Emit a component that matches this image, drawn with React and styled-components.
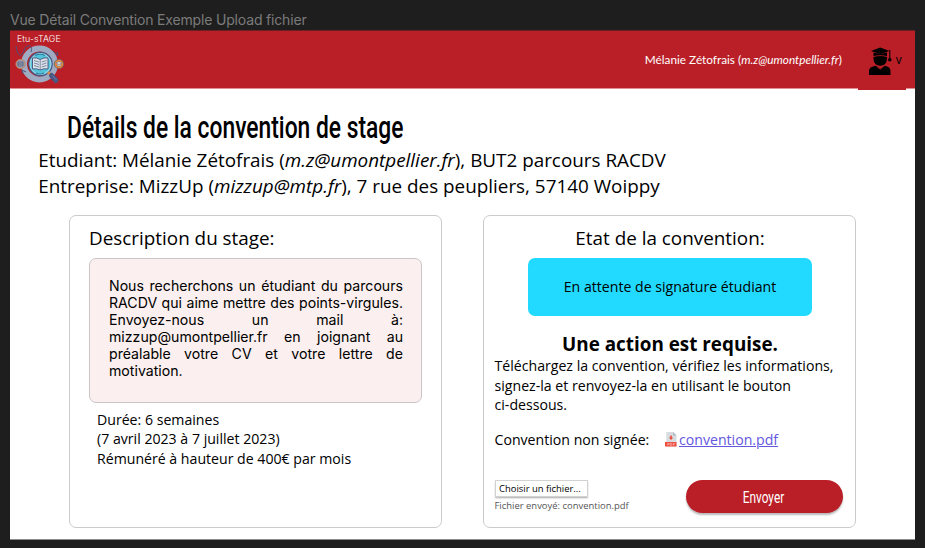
import React from "react";
import styled, { createGlobalStyle } from "styled-components";

const RED = "#ba1f27";

const GlobalStyle = createGlobalStyle`
  * { box-sizing: border-box; }
  body { margin: 0; background: #1e1e1e; }
  h1, h2, p { margin: 0; font-weight: 400; }
`;

const Canvas = styled.main`
  width: 925px;
  height: 548px;
  padding: 0 10px;
  overflow: hidden;
  background: #1e1e1e;
  color: #000;
  font-family: "Open Sans", sans-serif;
`;

const FrameLabel = styled.div`
  height: 30px;
  padding-top: 11px;
  font: 400 14px/18px Inter, sans-serif;
  letter-spacing: -0.17px;
  color: #7b7b7b;
  white-space: nowrap;
`;

const Frame = styled.div`
  width: 905px;
  height: 510px;
  border-bottom: 1px solid #8e8e8e;
  background: #fff;
`;

const Header = styled.header`
  display: flex;
  align-items: flex-start;
  height: 59px;
  border-top: 1px solid #6b1f23;
  border-bottom: 1px solid #e08f93;
  background: ${RED};
`;

const Brand = styled.div`
  display: flex;
  flex-direction: column;
  width: 60px;
  padding: 2px 0 0 5px;
`;

const BrandName = styled.div`
  width: 48px;
  padding-left: 2px;
  height: 11px;
  font: 300 8.8px/11px Inter, sans-serif;
  letter-spacing: 0.1px;
  color: #fff;
  white-space: nowrap;
`;

const User = styled.div`
  margin-left: auto;
  margin-right: 16px;
  padding-top: 22px;
  font: 400 11.8px/14px Lato, sans-serif;
  color: #fff;
  white-space: nowrap;
`;

const Avatar = styled.button`
  display: flex;
  align-items: flex-start;
  width: 48px;
  height: 59px;
  margin-right: 9px;
  padding: 15.5px 0 0 11px;
  border: 0;
  background: ${RED};
`;

const Caret = styled.span`
  margin: 6px 0 0 3.5px;
  font: 400 11.5px/14px Inter, sans-serif;
  color: #000;
`;

const Narrow = styled.span`
  display: inline-block;
  font-family: Roboto, sans-serif;
  font-weight: ${(p) => p.$weight || 500};
  white-space: nowrap;
  transform: scaleX(${(p) => p.$scale});
  transform-origin: ${(p) => p.$origin || "left"} center;
`;

const Title = styled.h1`
  height: 58px;
  padding: 18px 0 0 57px;
  font-size: 32px;
  line-height: 38px;
`;

const Summary = styled.div`
  padding-left: 28.3px;
  font-size: 18.86px;
  line-height: 26px;
  white-space: nowrap;
`;

const Cards = styled.section`
  display: flex;
  gap: 41px;
  padding: 16px 0 0 59px;
`;

const Card = styled.article`
  width: 373px;
  height: 312.5px;
  border: 1px solid #cbcbcb;
  border-radius: 7px;
  padding: ${(p) => p.$pad};
`;

const CardTitle = styled.h2`
  height: 33px;
  font-size: 18.86px;
  line-height: 26px;
  text-align: ${(p) => p.$align || "left"};
`;

const Description = styled.div`
  width: 333px;
  height: 145px;
  padding: 17.5px 18px 0 19px;
  border: 1px solid #cbc6c6;
  border-radius: 7px;
  background: #fbf0ef;
  font: 400 14.14px/17px Inter, sans-serif;
  text-align: justify;
`;

const Body = styled.p`
  font-size: 14.14px;
  line-height: 19.3px;
  white-space: nowrap;
`;

const Terms = styled(Body)`
  padding: 7.1px 0 0 8px;
`;

const Status = styled.div`
  display: flex;
  align-items: center;
  justify-content: center;
  width: 284px;
  height: 58px;
  padding-bottom: 2px;
  margin: 0 auto;
  border-radius: 7px;
  background: #22daff;
  font-size: 14.14px;
`;

const Alert = styled.h2`
  margin-top: 15px;
  font-size: 18.86px;
  line-height: 26px;
  font-weight: 700;
  text-align: center;
`;

const Instructions = styled(Body)`
  margin-top: -0.7px;
`;

const Download = styled.div`
  display: flex;
  align-items: center;
  height: 20px;
  margin-top: 15px;
  font-size: 14.14px;
  white-space: nowrap;
`;

const DownloadLabel = styled.span`
  width: 170px;
`;

const Link = styled.a`
  margin-left: 2.5px;
  color: #6457e0;
  text-decoration: underline;
  text-decoration-thickness: 1px;
  text-underline-offset: 1px;
`;

const Actions = styled.div`
  display: flex;
  justify-content: space-between;
  padding-right: 3px;
  margin-top: 31px;
`;

const FileButton = styled.button`
  display: block;
  width: 93px;
  height: 17px;
  padding: 0 0 0 3.5px;
  border: 1px solid #d2d2d2;
  background: #fff;
  box-shadow: 0 1.5px 1.5px rgba(0, 0, 0, 0.25);
  font: 400 9.43px/14px "Open Sans", sans-serif;
  color: #000;
  text-align: left;
  white-space: nowrap;
`;

const FileNote = styled.div`
  margin-top: 2px;
  font-size: 9.45px;
  line-height: 13px;
  color: #555;
  white-space: nowrap;
`;

const Submit = styled.button`
  width: 157px;
  height: 33px;
  padding: 0 1px 0 0;
  border: 0;
  border-radius: 17px;
  background: ${RED};
  box-shadow: 0 2px 2px rgba(0, 0, 0, 0.28);
  color: #fff;
  font-size: 16.3px;
  line-height: 34px;
`;

function Logo() {
  return (
    <svg width="50" height="41" viewBox="0 0 50 41">
      <circle cx="24.5" cy="20" r="15.5" fill="none" stroke="#9eabc3" strokeWidth="6" />
      <path d="M1 2C2 9 4 12 6 11C10 9 8 3 13 2C17 1 17 5 16 8M38 7L43 12L42 8M8 30L7 26L11 28" fill="none" stroke="#4a527b" strokeWidth="1" />
      <circle cx="25.5" cy="20" r="11.7" fill="#53c5db" stroke="#4b5681" strokeWidth="1.2" />
      <circle cx="25.5" cy="20" r="10.4" fill="none" stroke="#b7d7e6" strokeWidth="0.9" />
      <path d="M20 11.5Q25 9 30 11.5M21 29Q25 31 29 29" fill="none" stroke="#29799b" strokeWidth="1.1" />
      <path d="M17.5 14Q21.5 13.2 25.2 15.5Q29 13.2 33 14V25Q29 24 25.2 26Q21.5 24 17.5 25Z" fill="#dce3e9" stroke="#46517b" strokeWidth="0.9" />
      <path d="M25.2 15.5V26M19 16.5L24 18M19 19L24 20.5M19 21.5L24 23M26.7 18L31.5 16.5M26.7 20.5L31.5 19M26.7 23L31.5 21.5" fill="none" stroke="#65708f" strokeWidth="0.8" />
      <path d="M33 28L36 31" stroke="#d58b52" strokeWidth="3" />
      <path d="M36.5 31.5L41 36.5" stroke="#485681" strokeWidth="5" strokeLinecap="round" />
      <path d="M37.5 31.5L41.5 36" stroke="#7380a4" strokeWidth="1" />
      <circle cx="5.5" cy="20" r="4.6" fill="#9ba3b2" stroke="#c77e50" strokeWidth="0.9" />
      <path d="M3 18H8V22H3ZM3 20H8" fill="none" stroke="#4f597d" strokeWidth="0.8" />
      <circle cx="44" cy="20" r="4.7" fill="#e18a3b" stroke="#61556c" strokeWidth="0.7" />
      <path d="M40.8 19L44 17.5L47.2 19L44 20.5ZM42 20.5V22H46V20.5" fill="#dfe2e4" stroke="#5d6480" strokeWidth="0.5" />
    </svg>
  );
}

function GraduateIcon() {
  return (
    <svg width="23" height="29" viewBox="0 0 23 29">
      <path d="M2 4L11.2 .4L20.5 4L11.2 7Z" />
      <path d="M4.5 5.6Q11.2 7.5 18 5.6V9Q11.2 7.3 4.5 9Z" />
      <path d="M4.5 10Q11.2 8.1 18 10V12Q17.5 18.8 11.2 18.8Q5 18.8 4.5 12Z" />
      <path d="M20.8 3V12" stroke="#000" strokeWidth="1" fill="none" />
      <circle cx="20.8" cy="12.8" r="1.8" />
      <path d="M0 28V24Q0 19.7 7 18.8L11.2 22L15.5 18.8Q21.5 19.7 21.5 24V28Z" />
      <path d="M7.2 18.8L11.2 22.3L15.3 18.8" fill="none" stroke={RED} strokeWidth=".7" />
    </svg>
  );
}

function PdfIcon() {
  return (
    <svg width="12" height="15" viewBox="0 0 12 15">
      <path d="M1.3 0H8L11.5 3.5V14.5H1.3Z" fill="#d7dce0" />
      <path d="M8 0V3.5H11.5Z" fill="#aeb9c1" />
      <path d="M5.2 3.5H6.8V5.5H8.2L6 8L3.8 5.5H5.2Z" fill="#e94b3c" />
      <path d="M0 10H11.5V14.5H0Z" fill="#ef4d40" />
      <path d="M2.7 13.6V11.3H4.2V12.4H2.7M5.4 11.3V13.4H6.5Q7.3 12.3 6.5 11.3ZM8.4 13.6V11.3H10M8.4 12.4H9.6" fill="none" stroke="#ffd8d3" strokeWidth=".5" />
    </svg>
  );
}

export default function App() {
  return (
    <Canvas>
      <GlobalStyle />
      <FrameLabel>Vue Détail Convention Exemple Upload fichier</FrameLabel>
      <Frame>
        <Header>
          <Brand>
            <BrandName>Etu-sTAGE</BrandName>
            <Logo />
          </Brand>
          <User>Mélanie Zétofrais (<em>m.z@umontpellier.fr</em>)</User>
          <Avatar aria-label="Compte">
            <GraduateIcon />
            <Caret>v</Caret>
          </Avatar>
        </Header>
        <Title><Narrow $scale={0.713}>Détails de la convention de stage</Narrow></Title>
        <Summary>
          <p>Etudiant: Mélanie Zétofrais (<em>m.z@umontpellier.fr</em>), BUT2 parcours RACDV</p>
          <p>Entreprise: MizzUp (<em>mizzup@mtp.fr</em>), 7 rue des peupliers, 57140 Woippy</p>
        </Summary>
        <Cards>
          <Card $pad="9px 19px 0">
            <CardTitle>Description du stage:</CardTitle>
            <Description>
              Nous recherchons un étudiant du parcours RACDV qui aime mettre des points-virgules. Envoyez-nous un mail à: mizzup@umontpellier.fr en joignant au préalable votre CV et votre lettre de motivation.
            </Description>
            <Terms>
              Durée: 6 semaines<br />
              (7 avril 2023 à 7 juillet 2023)<br />
              Rémunéré à hauteur de 400€ par mois
            </Terms>
          </Card>
          <Card $pad="9px 9.5px 0 10.5px">
            <CardTitle $align="center">Etat de la convention:</CardTitle>
            <Status>En attente de signature étudiant</Status>
            <Alert>Une action est requise.</Alert>
            <Instructions>
              Téléchargez la convention, vérifiez les informations,<br />
              signez-la et renvoyez-la en utilisant le bouton<br />
              ci-dessous.
            </Instructions>
            <Download>
              <DownloadLabel>Convention non signée:</DownloadLabel>
              <PdfIcon />
              <Link>convention.pdf</Link>
            </Download>
            <Actions>
              <div>
                <FileButton>Choisir un fichier...</FileButton>
                <FileNote>Fichier envoyé: convention.pdf</FileNote>
              </div>
              <Submit><Narrow $scale={0.73} $weight={400} $origin="center">Envoyer</Narrow></Submit>
            </Actions>
          </Card>
        </Cards>
      </Frame>
    </Canvas>
  );
}
